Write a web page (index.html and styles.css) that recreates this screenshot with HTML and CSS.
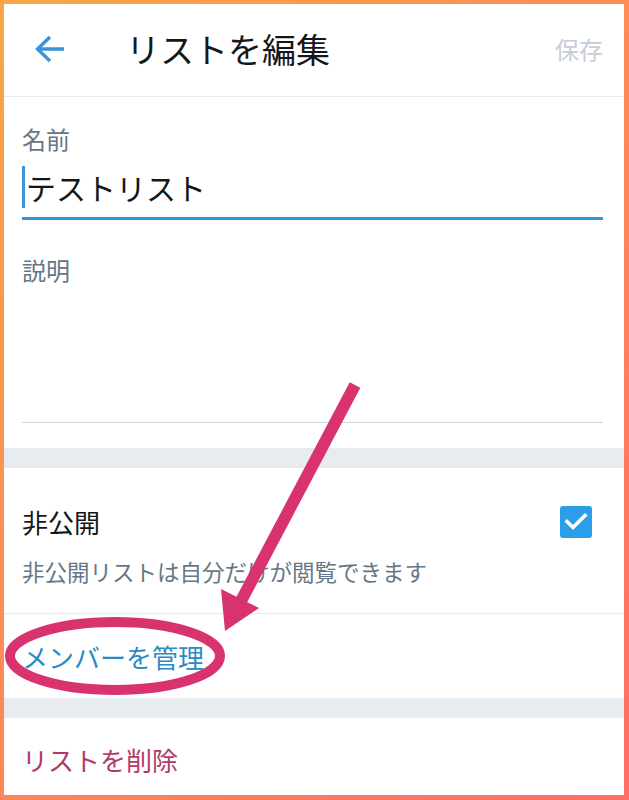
FILE: index.html
```html
<!DOCTYPE html>
<html lang="ja">
<head>
<meta charset="utf-8">
<title>リストを編集</title>
<link rel="stylesheet" href="styles.css">
</head>
<body>
<div class="frame">
  <header class="appbar">
    <svg class="back" viewBox="0 0 30 28" width="30" height="28" aria-hidden="true">
      <path d="M2 14H29M15 2L2.5 14L15 26" fill="none" stroke="#3b94d9" stroke-width="3.4" stroke-linecap="butt" stroke-linejoin="miter"/>
    </svg>
    <h1 class="title">リストを編集</h1>
    <span class="save">保存</span>
  </header>

  <section class="form">
    <div class="field">
      <div class="label">名前</div>
      <div class="input"><span class="caret"></span>テストリスト</div>
    </div>
    <div class="field desc-field">
      <div class="label">説明</div>
      <div class="textarea"></div>
    </div>
  </section>

  <div class="band"></div>

  <section class="private">
    <div class="private-row">
      <span class="private-title">非公開</span>
      <span class="checkbox">
        <svg viewBox="0 0 32 32" width="32" height="32" aria-hidden="true">
          <path d="M7 15.5L13 21.5L25 9.5" fill="none" stroke="#fff" stroke-width="3.6" stroke-linecap="square"/>
        </svg>
      </span>
    </div>
    <p class="hint">非公開リストは自分だけが閲覧できます</p>
  </section>

  <div class="action manage">メンバーを管理</div>

  <div class="band"></div>

  <div class="action delete">リストを削除</div>

  <svg class="annot" viewBox="0 0 629 800" width="629" height="800" aria-hidden="true">
    <line x1="355" y1="385" x2="241" y2="601" stroke="#d8336f" stroke-width="12"/>
    <polygon points="225,631 259,608 221,589" fill="#d8336f"/>
    <ellipse cx="115" cy="656" rx="105" ry="34" fill="none" stroke="#d8336f" stroke-width="10"/>
  </svg>
</div>
</body>
</html>
```

FILE: styles.css
```css
* {
  box-sizing: border-box;
}

html, body {
  margin: 0;
  padding: 0;
  background: #ffffff;
}

body {
  font-family: "Noto Sans CJK JP", "Noto Sans", "Liberation Sans", sans-serif;
  color: #14171a;
}

.frame {
  position: relative;
  width: 629px;
  height: 800px;
  overflow: hidden;
  background: #ffffff;
  border-style: solid;
  border-width: 4px 5px 5px 4px;
  border-image: linear-gradient(135deg, #f8a646 0%, #fd8c55 45%, #ff6d66 100%) 1;
}

/* Header */
.appbar {
  display: flex;
  align-items: center;
  height: 93px;
  padding: 0 21px 2px 31px;
  border-bottom: 1px solid #e6ecf0;
}

.back {
  display: block;
  flex: none;
}

.title {
  margin: 0 0 0 61px;
  font-size: 34px;
  font-weight: 400;
  line-height: 1;
  color: #14171a;
}

.save {
  margin-left: auto;
  font-size: 24px;
  line-height: 1;
  color: #c5ced6;
}

/* Form */
.form {
  padding: 26px 21px 25px 18px;
}

.label {
  font-size: 24px;
  line-height: 32px;
  color: #657786;
}

.input {
  margin-top: 11px;
  font-size: 30px;
  line-height: 42px;
  padding-bottom: 9px;
  border-bottom: 3px solid #2f95dc;
  color: #14171a;
}

.caret {
  display: inline-block;
  width: 3px;
  height: 42px;
  margin-right: 1px;
  vertical-align: top;
  background: #3b94d9;
}

.desc-field {
  margin-top: 34px;
}

.textarea {
  height: 137px;
  border-bottom: 1px solid #ccd6dd;
}

.band {
  height: 20px;
  background: #e6ecf0;
}

/* Private */
.private {
  padding: 36px 21px 26px 18px;
  border-bottom: 1px solid #e6ecf0;
}

.private-row {
  display: flex;
  align-items: center;
  justify-content: space-between;
  height: 36px;
}

.private-title {
  font-size: 26px;
  line-height: 36px;
  color: #14171a;
}

.checkbox {
  display: block;
  width: 32px;
  height: 32px;
  margin-right: 11px;
  border-radius: 3px;
  background: #2b9de9;
}

.checkbox svg {
  display: block;
}

.hint {
  margin: 15px 0 0;
  font-size: 22.5px;
  line-height: 32px;
  color: #657786;
}

/* Actions */
.action {
  padding-left: 18px;
  font-size: 26px;
  line-height: 36px;
}

.manage {
  display: flex;
  align-items: center;
  height: 84px;
  padding-top: 2px;
  color: #2a8ac4;
}

.delete {
  padding-top: 24px;
  color: #b23a6b;
}

/* Annotation overlay */
.annot {
  position: absolute;
  top: -4px;
  left: -4px;
  pointer-events: none;
}
```
